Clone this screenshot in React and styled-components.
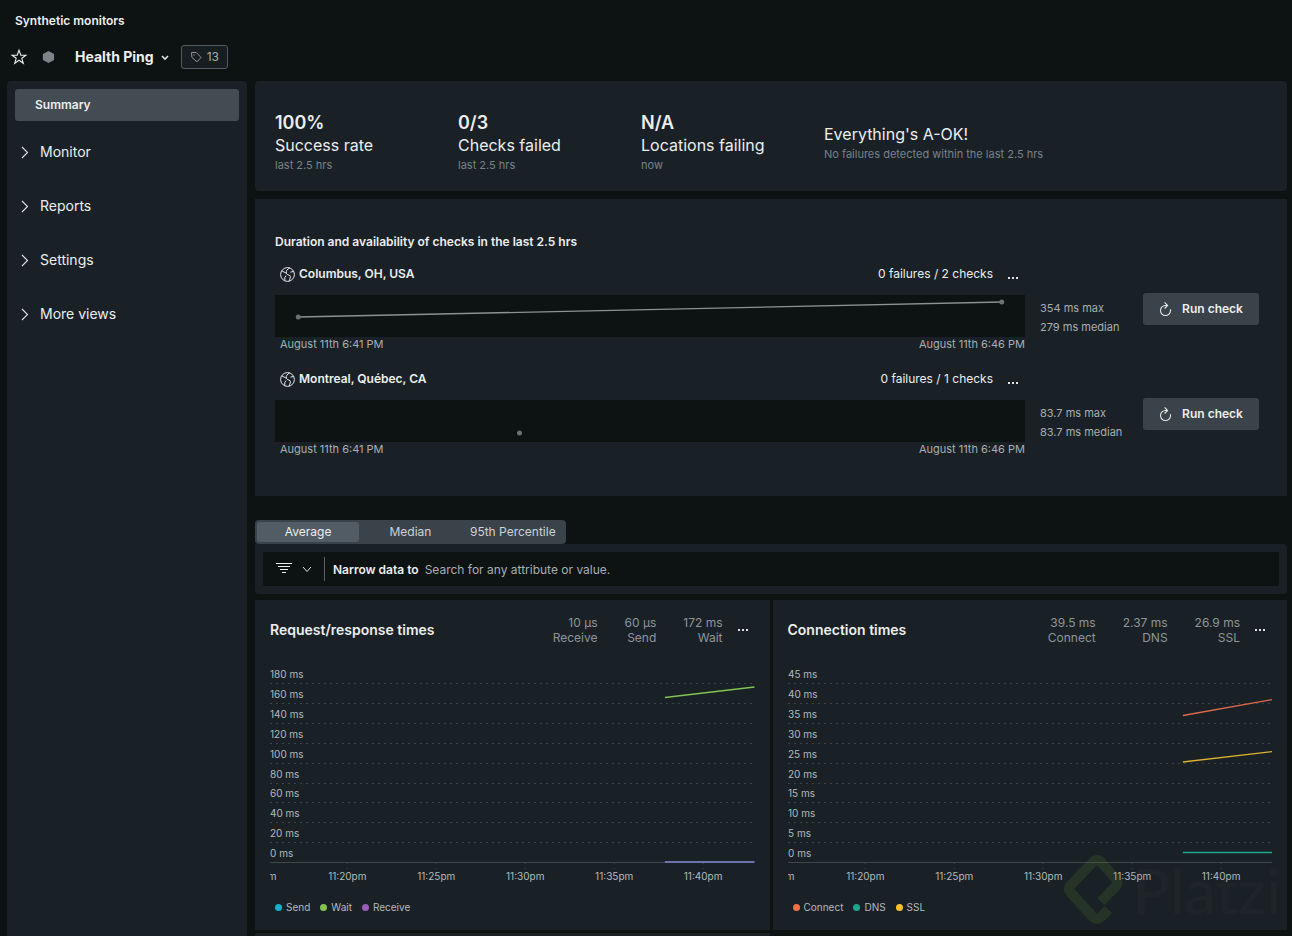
import React from "react";
import styled, { createGlobalStyle } from "styled-components";

const colors = {
    page: "#0d1213",
    panel: "#192127",
    raised: "#3a434a",
    selected: "#434b53",
    text: "#eceeee",
    muted: "#a9aeb1",
    faint: "#7a8187",
};

const GlobalStyle = createGlobalStyle`
    *,
    *::before,
    *::after {
        box-sizing: border-box;
    }

    body {
        margin: 0;
        background: ${colors.page};
        color: ${colors.text};
        font-family: Inter, "Liberation Sans", sans-serif;
        font-size: 12px;
        line-height: 16px;
    }

    button,
    input {
        font: inherit;
        color: inherit;
        border: 0;
        margin: 0;
        padding: 0;
        background: none;
    }

    button {
        cursor: pointer;
    }

    h1, h2, h3, p, ul, dl, dd {
        margin: 0;
        padding: 0;
    }
`;

const Page = styled.div`
    display: flex;
    flex-direction: column;
    height: 100vh;
    overflow: hidden;
`;

const Header = styled.header`
    padding: 13px 15px 12px 8px;
`;

const Crumb = styled.a`
    display: block;
    padding-left: 7px;
    color: ${colors.text};
    font-weight: 600;
    text-decoration: none;
`;

const TitleRow = styled.div`
    display: flex;
    align-items: center;
    height: 24px;
    margin-top: 16px;
`;

const IconButton = styled.button`
    display: flex;
    align-items: center;
`;

const Status = styled.span`
    display: flex;
    margin: 0 20px 0 12px;
`;

const TitleButton = styled.button`
    display: flex;
    align-items: center;
    gap: 6px;
    font-size: 14px;
    font-weight: 700;
    line-height: 20px;
`;

const TagButton = styled.button`
    display: flex;
    align-items: center;
    gap: 5px;
    height: 24px;
    margin-left: 11px;
    padding: 0 8px;
    border: 1px solid #535c63;
    border-radius: 3px;
    background: #171e22;
    color: ${colors.muted};
`;

const Body = styled.div`
    display: flex;
    flex: 1;
    gap: 8px;
    min-height: 0;
    padding: 0 5px 0 7px;
`;

const Sidebar = styled.nav`
    flex: 0 0 240px;
    padding: 8px;
    border-radius: 4px 4px 0 0;
    background: ${colors.panel};
`;

const SummaryLink = styled.a`
    display: block;
    margin-bottom: 4px;
    padding: 8px 20px;
    border-radius: 3px;
    background: ${colors.selected};
    color: ${colors.text};
    font-weight: 600;
    text-decoration: none;
`;

const NavGroup = styled.button`
    display: flex;
    align-items: center;
    gap: 11px;
    width: 100%;
    height: 54px;
    padding-left: 6px;
    font-size: 14px;
`;

const Main = styled.main`
    display: flex;
    flex: 1;
    flex-direction: column;
    min-width: 0;
`;

const Overview = styled.section`
    display: grid;
    grid-template-columns: repeat(3, 183px) 1fr;
    align-items: center;
    padding: 31px 20px 17px;
    border-radius: 4px;
    background: ${colors.panel};
`;

const OverviewValue = styled.p`
    font-size: 18px;
    font-weight: 600;
    line-height: 22px;
`;

const OverviewLabel = styled.p`
    font-size: 16px;
    line-height: 22px;
`;

const OverviewNote = styled.p`
    color: ${colors.faint};
    font-size: 11px;
    line-height: 18px;
`;

const Checks = styled.section`
    margin-top: 8px;
    padding: 35px 28px 36px 20px;
    background: ${colors.panel};
`;

const ChecksTitle = styled.h2`
    font-size: 12px;
    font-weight: 600;
    line-height: 16px;
`;

const CheckRow = styled.article`
    display: grid;
    grid-template-columns: 1fr 88px 116px;
    gap: 0 15px;
    padding-top: 12px;
    margin-bottom: 3px;
`;

const CheckHead = styled.div`
    display: flex;
    align-items: center;
    gap: 4px;
    height: 24px;
    padding: 0 6px 0 5px;
`;

const Location = styled.h3`
    flex: 1;
    font-size: 12px;
    font-weight: 600;
`;

const DotsButton = styled.button`
    display: flex;
    margin-left: ${({ $gap }) => $gap}px;
    padding-top: ${({ $drop }) => $drop || 0}px;
`;

const Spark = styled.svg`
    display: block;
    width: 100%;
    height: 42px;
    margin-top: 9px;
    background: ${colors.page};
`;

const SparkDates = styled.div`
    display: flex;
    justify-content: space-between;
    padding-left: 5px;
    color: ${colors.muted};
    font-size: 11px;
    line-height: 15px;
`;

const CheckStats = styled.div`
    padding-top: 37px;
    color: ${colors.muted};
    font-size: 11px;
    line-height: 19px;
    white-space: nowrap;
`;

const RunButton = styled.button`
    display: flex;
    align-items: center;
    justify-content: center;
    gap: 10px;
    height: 32px;
    margin-top: 31px;
    border-radius: 3px;
    background: ${colors.raised};
    font-weight: 600;
`;

const Tabs = styled.div`
    display: grid;
    grid-template-columns: repeat(3, 1fr);
    align-self: flex-start;
    width: 311px;
    height: 24px;
    margin-top: 24px;
    padding: 2px;
    border-radius: 4px;
    background: ${colors.raised};
`;

const Tab = styled.button`
    border-radius: 3px;
    background: ${({ $active }) => ($active ? "#525c64" : "none")};
    color: ${({ $active }) => ($active ? colors.text : "#ced2d4")};
    line-height: 20px;
    white-space: nowrap;
`;

const FilterPanel = styled.div`
    padding: 8px;
    border-radius: 0 4px 4px 4px;
    background: ${colors.panel};
`;

const FilterBar = styled.div`
    display: flex;
    align-items: center;
    height: 34px;
    padding-left: 13px;
    border-radius: 2px;
    background: ${colors.page};
`;

const FilterButton = styled.button`
    display: flex;
    align-items: center;
    gap: 10px;
    height: 24px;
    padding-right: 12px;
    border-right: 1px solid #59626a;
`;

const FilterLabel = styled.label`
    padding: 1px 6px 0 8px;
    font-weight: 600;
`;

const FilterInput = styled.input`
    flex: 1;
    min-width: 0;
    height: 24px;
    outline: none;

    &::placeholder {
        color: ${colors.muted};
        opacity: 1;
    }
`;

const ChartGrid = styled.div`
    display: grid;
    grid-template-columns: 1fr 1fr;
    grid-template-rows: 330px 1fr;
    flex: 1;
    gap: 3px;
    min-height: 0;
    margin-top: 6px;
`;

const Card = styled.section`
    min-width: 0;
    padding: 15px;
    background: ${colors.panel};
`;

const CardHead = styled.header`
    display: flex;
    align-items: center;
    height: 30px;
    padding-right: 6px;
`;

const CardTitle = styled.h2`
    flex: 1;
    font-size: 14px;
    font-weight: 600;
`;

const Metrics = styled.dl`
    display: flex;
    gap: 27px;
    color: #8f9599;
    line-height: 15px;
    text-align: right;

    div {
        display: flex;
        flex-direction: column-reverse;
    }
`;

const Plot = styled.svg`
    display: block;
    width: 100%;
    height: 230px;
    margin-top: 15px;
    overflow: hidden;

    text {
        fill: #b4b9bc;
        font-size: 10px;
    }
`;

const Legend = styled.ul`
    display: flex;
    gap: 10px;
    padding: 9px 0 0 5px;
    color: #b4b9bc;
    font-size: 10px;
    line-height: 16px;
    list-style: none;
`;

const LegendItem = styled.li`
    display: flex;
    align-items: center;
    gap: 4px;

    &::before {
        content: "";
        width: 7px;
        height: 7px;
        border-radius: 50%;
        background: ${({ $color }) => $color};
    }
`;

const Watermark = styled.div`
    position: fixed;
    right: 11px;
    bottom: 10px;
    display: flex;
    align-items: center;
    gap: 8px;
    color: rgba(110, 90, 60, 0.07);
    font-family: Lato, sans-serif;
    font-size: 62px;
    font-weight: 500;
    line-height: 72px;
    pointer-events: none;
`;

const StarIcon = () => (
    <svg width="21" height="20" viewBox="0 0 21 20" fill="none">
        <path
            d="M11 3.2l1.8 5h5.1l-4.1 3.1 1.5 5L11 13.2l-4.3 3.1 1.5-5L4.1 8.2h5.1z"
            stroke="#eceeee"
            strokeWidth="1.1"
        />
    </svg>
);

const HexIcon = () => (
    <svg width="14" height="14" viewBox="0 0 14 14">
        <path d="M7.5 1l5.6 3.1v5.8L7.5 13 1.9 9.9V4.1z" fill="#7d838a" />
    </svg>
);

const TagIcon = () => (
    <svg width="12" height="12" viewBox="0 0 12 12" fill="none">
        <path
            d="M1.5 1.5h4.8l4.8 5-4.1 4.3-5.1-4.4z"
            stroke="#8e9499"
            strokeLinejoin="round"
        />
        <rect x="3.4" y="3.4" width="1.2" height="1.2" fill="#8e9499" />
    </svg>
);

const Chevron = ({ width, height, d, stroke = 1 }) => (
    <svg width={width} height={height} fill="none">
        <path d={d} stroke="#dfe2e3" strokeWidth={stroke} />
    </svg>
);

const GlobeIcon = () => (
    <svg width="15" height="16" viewBox="0 0 15 16" fill="none" stroke="#e6e8e9">
        <circle cx="7.5" cy="8.5" r="6.9" />
        <path d="M1.7 4.8L6.3 7.2c-.3-2.3.8-4.1 3.4-5.3M6.3 7.2c.8 1.7 2.2 1.5 3.8 2.5.9 1.4-.4 3-.9 5.3M6 9.600L4.800 11.500V14.600M13.600 5.400L10.400 6.200" />
    </svg>
);

const RefreshIcon = () => (
    <svg width="13" height="16" viewBox="0 0 13 16" fill="none" stroke="#e6e8e9">
        <path d="M8.2 4.5H6.5a5 5 0 1 0 5 5V8.2" strokeWidth="1.1" />
        <path d="M5.6 1.4l3 3.1-3 3" strokeWidth="1.1" />
    </svg>
);

const FilterIcon = () => (
    <svg width="16" height="14" viewBox="0 0 16 14" stroke="#eceeee">
        <path d="M0 1.5h16M2 4.5h12M4 7.5h8M6 10.5h4" />
    </svg>
);

const Dots = () => (
    <svg width="12" height="4" viewBox="0 0 12 4" fill="#e0e3e4">
        <path d="M1 1h2v2H1zM5 1h2v2H5zM9 1h2v2H9z" />
    </svg>
);

const overview = [
    { value: "100%", label: "Success rate", note: "last 2.5 hrs" },
    { value: "0/3", label: "Checks failed", note: "last 2.5 hrs" },
    { value: "N/A", label: "Locations failing", note: "now" },
    {
        label: "Everything's A-OK!",
        note: "No failures detected within the last 2.5 hrs",
    },
];

const checks = [
    {
        location: "Columbus, OH, USA",
        result: "0 failures / 2 checks",
        max: "354 ms max",
        median: "279 ms median",
        points: [
            { x: "3.1%", y: 22 },
            { x: "96.9%", y: 7 },
        ],
    },
    {
        location: "Montreal, Québec, CA",
        result: "0 failures / 1 checks",
        max: "83.7 ms max",
        median: "83.7 ms median",
        points: [{ x: "32.6%", y: 33 }],
    },
];

const charts = [
    {
        title: "Request/response times",
        step: 20,
        metrics: [
            ["10 µs", "Receive"],
            ["60 µs", "Send"],
            ["172 ms", "Wait"],
        ],
        series: [
            { name: "Send", color: "#11b0d1" },
            { name: "Wait", color: "#84c254" },
            { name: "Receive", color: "#9b5bb8" },
        ],
        // Send and Receive overlap on the axis and read as one blended line
        lines: [
            { color: "#84c254", from: 37.5, to: 27 },
            { color: "#6a73ad", from: 202, to: 202, width: 2 },
        ],
    },
    {
        title: "Connection times",
        step: 5,
        metrics: [
            ["39.5 ms", "Connect"],
            ["2.37 ms", "DNS"],
            ["26.9 ms", "SSL"],
        ],
        series: [
            { name: "Connect", color: "#fa6e46" },
            { name: "DNS", color: "#1fa58d" },
            { name: "SSL", color: "#fbc02d" },
        ],
        lines: [
            { color: "#dd6a4a", from: 55.5, to: 39.5 },
            { color: "#dbb02f", from: 102, to: 91.5 },
            { color: "#1fa58d", from: 192.5, to: 192.5 },
        ],
    },
];

const times = ["11:15pm", "11:20pm", "11:25pm", "11:30pm", "11:35pm", "11:40pm"];

const Check = ({ check }) => (
    <CheckRow>
        <div>
            <CheckHead>
                <GlobeIcon />
                <Location>{check.location}</Location>
                <span>{check.result}</span>
                <DotsButton $gap={10} $drop={7} aria-label="More options">
                    <Dots />
                </DotsButton>
            </CheckHead>
            <Spark>
                {check.points.length > 1 && (
                    <line
                        x1={check.points[0].x}
                        y1={check.points[0].y}
                        x2={check.points[1].x}
                        y2={check.points[1].y}
                        stroke="#8d9291"
                        strokeWidth="1.3"
                    />
                )}
                {check.points.map(({ x, y }) => (
                    <circle key={x} cx={x} cy={y} r="2.5" fill="#6c7271" />
                ))}
            </Spark>
            <SparkDates>
                <span>August 11th 6:41 PM</span>
                <span>August 11th 6:46 PM</span>
            </SparkDates>
        </div>
        <CheckStats>
            <p>{check.max}</p>
            <p>{check.median}</p>
        </CheckStats>
        <RunButton>
            <RefreshIcon />
            Run check
        </RunButton>
    </CheckRow>
);

const Chart = ({ chart }) => (
    <Card>
        <CardHead>
            <CardTitle>{chart.title}</CardTitle>
            <Metrics>
                {chart.metrics.map(([value, name]) => (
                    <div key={name}>
                        <dt>{name}</dt>
                        <dd>{value}</dd>
                    </div>
                ))}
            </Metrics>
            <DotsButton $gap={14} aria-label="Chart options">
                <Dots />
            </DotsButton>
        </CardHead>
        <Plot>
            {Array.from({ length: 10 }, (_, i) => {
                const y = Math.round(23 + i * 19.9) + 0.5;
                const last = i === 9;
                return (
                    <g key={i}>
                        <line
                            x1="0"
                            x2="100%"
                            y1={y}
                            y2={y}
                            stroke={last ? "#3d484c" : "#3a4449"}
                            strokeDasharray={last ? undefined : "2 4"}
                        />
                        <text x="0" y={y - 6}>
                            {(9 - i) * chart.step} ms
                        </text>
                    </g>
                );
            })}
            {times.map((time, i) => {
                const x = `${-2.4 + i * 18.36}%`;
                return (
                    <g key={time}>
                        <line
                            x1={x}
                            x2={x}
                            y1="203"
                            y2="209"
                            stroke="#3d484c"
                            strokeDasharray="1 4"
                        />
                        <text x={x} y="220" textAnchor="middle">
                            {time}
                        </text>
                    </g>
                );
            })}
            {chart.lines.map(({ color, from, to, width = 1.3 }) => (
                <line
                    key={color}
                    x1="81.5%"
                    x2="100%"
                    y1={from}
                    y2={to}
                    stroke={color}
                    strokeWidth={width}
                />
            ))}
        </Plot>
        <Legend>
            {chart.series.map(({ name, color }) => (
                <LegendItem key={name} $color={color}>
                    {name}
                </LegendItem>
            ))}
        </Legend>
    </Card>
);

const App = () => (
    <>
        <GlobalStyle />
        <Page>
            <Header>
                <Crumb href="#monitors">Synthetic monitors</Crumb>
                <TitleRow>
                    <IconButton aria-label="Add to favorites">
                        <StarIcon />
                    </IconButton>
                    <Status>
                        <HexIcon />
                    </Status>
                    <TitleButton>
                        Health Ping
                        <Chevron
                            width={10}
                            height={8}
                            d="M2 3l3 3 3-3"
                            stroke={1.6}
                        />
                    </TitleButton>
                    <TagButton>
                        <TagIcon />
                        13
                    </TagButton>
                </TitleRow>
            </Header>
            <Body>
                <Sidebar>
                    <SummaryLink href="#summary">Summary</SummaryLink>
                    {["Monitor", "Reports", "Settings", "More views"].map(
                        (name) => (
                            <NavGroup key={name}>
                                <Chevron
                                    width={8}
                                    height={13}
                                    d="M1 1l5.5 5.5L1 12"
                                    stroke={1.1}
                                />
                                {name}
                            </NavGroup>
                        )
                    )}
                </Sidebar>
                <Main>
                    <Overview>
                        {overview.map(({ value, label, note }) => (
                            <div key={label}>
                                {value && (
                                    <OverviewValue>{value}</OverviewValue>
                                )}
                                <OverviewLabel>{label}</OverviewLabel>
                                <OverviewNote>{note}</OverviewNote>
                            </div>
                        ))}
                    </Overview>
                    <Checks>
                        <ChecksTitle>
                            Duration and availability of checks in the last 2.5
                            hrs
                        </ChecksTitle>
                        {checks.map((check) => (
                            <Check key={check.location} check={check} />
                        ))}
                    </Checks>
                    <Tabs>
                        <Tab $active>Average</Tab>
                        <Tab>Median</Tab>
                        <Tab>95th Percentile</Tab>
                    </Tabs>
                    <FilterPanel>
                        <FilterBar>
                            <FilterButton aria-label="Filters">
                                <FilterIcon />
                                <Chevron
                                    width={10}
                                    height={7}
                                    d="M1 1l4 4.5L9 1"
                                />
                            </FilterButton>
                            <FilterLabel htmlFor="narrow">
                                Narrow data to
                            </FilterLabel>
                            <FilterInput
                                id="narrow"
                                type="text"
                                placeholder="Search for any attribute or value."
                            />
                        </FilterBar>
                    </FilterPanel>
                    <ChartGrid>
                        {charts.map((chart) => (
                            <Chart key={chart.title} chart={chart} />
                        ))}
                        <Card />
                    </ChartGrid>
                </Main>
            </Body>
        </Page>
        <Watermark>
            <svg width="62" height="72" viewBox="0 0 62 72" fill="none">
                <path
                    d="M38 47.5L53 32Q56 28.5 53 25L38 8Q34 4 30 8L8 31Q4 35 8 39L30 63Q34 67 38 63L45.5 55.5"
                    stroke="#59822b"
                    strokeOpacity="0.2"
                    strokeWidth="10"
                />
            </svg>
            <span>Platzi</span>
        </Watermark>
    </>
);

export default App;
